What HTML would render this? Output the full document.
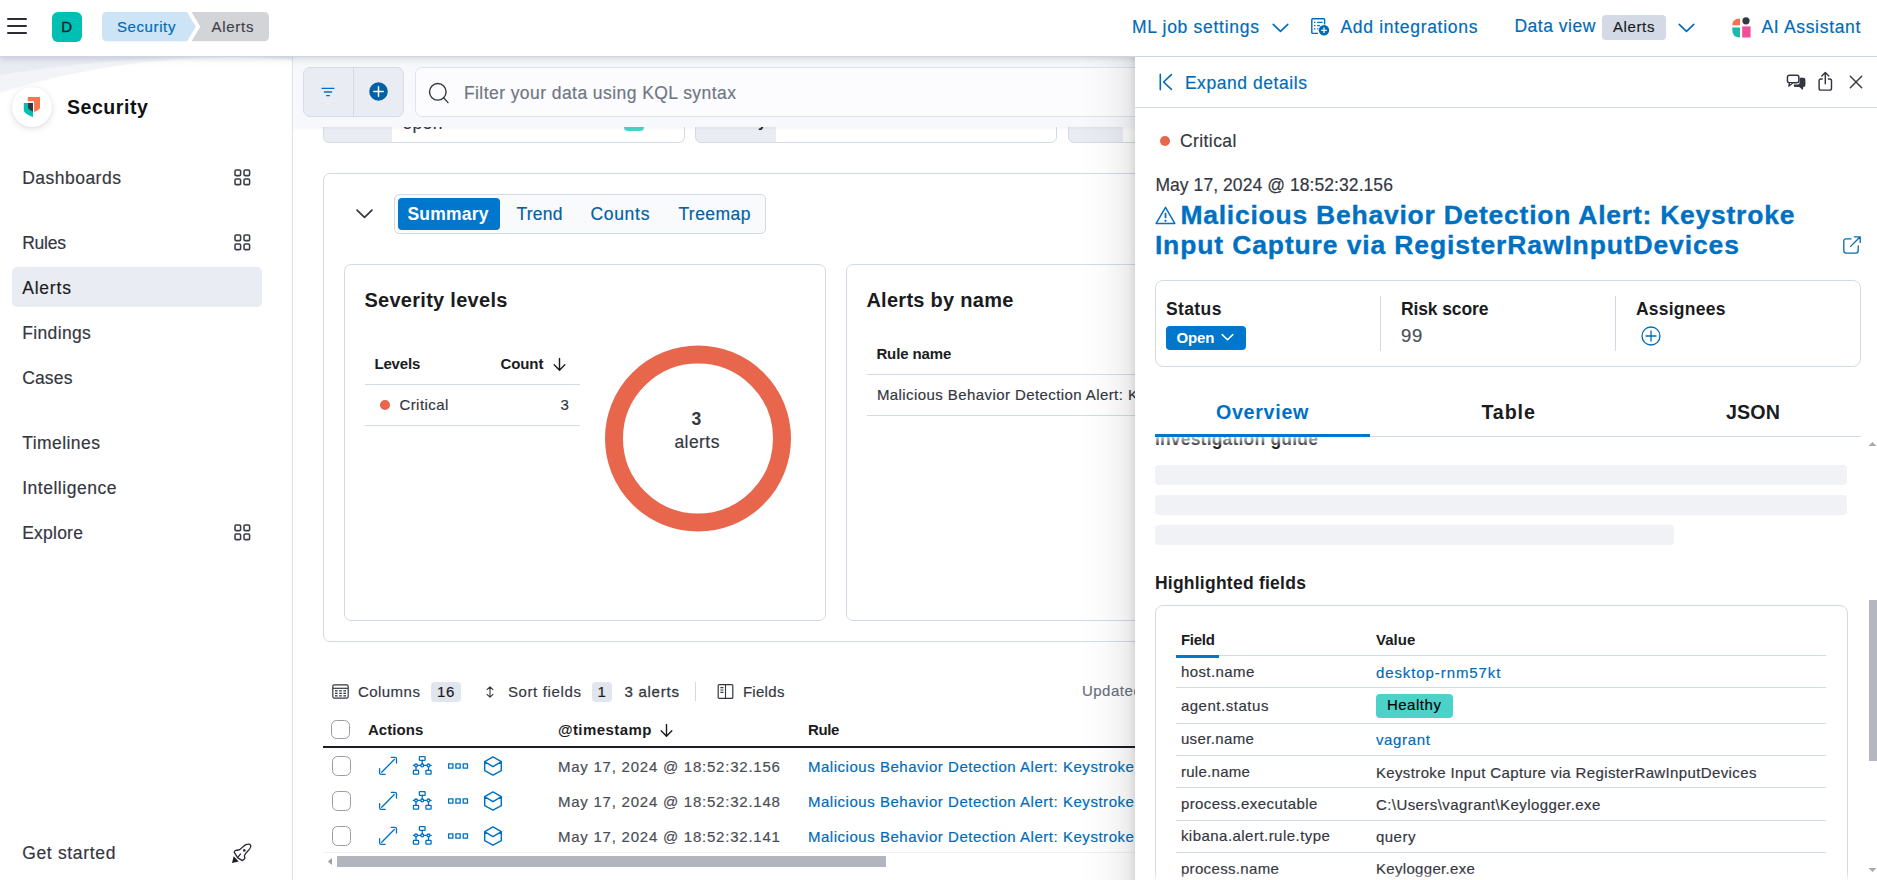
<!DOCTYPE html>
<html lang="en"><head><meta charset="utf-8"><title>Alerts - Security</title>
<style>
html,body{margin:0;padding:0;}
body{width:1877px;height:880px;overflow:hidden;background:#fff;position:relative;font-family:"Liberation Sans",sans-serif;}
.layer{position:absolute;left:0;top:0;width:1877px;height:880px;overflow:hidden;pointer-events:none;}
.layer>div,.layer>span,.layer>svg{position:absolute;box-sizing:border-box;}
.layer>span{white-space:nowrap;}
svg{overflow:visible;}
</style></head><body>
<div class="layer main" style="clip-path:inset(56px 742px 0 293px);">
<div style="left:323px;top:100px;width:362px;height:43px;border:1px solid #d3dae6;border-radius:6px;background:linear-gradient(90deg,#e9edf3 0,#e9edf3 68px,#fff 68px);"></div>
<div style="left:695px;top:100px;width:362px;height:43px;border:1px solid #d3dae6;border-radius:6px;background:linear-gradient(90deg,#e9edf3 0,#e9edf3 80px,#fff 80px);"></div>
<div style="left:1068px;top:100px;width:362px;height:43px;border:1px solid #d3dae6;border-radius:6px;background:linear-gradient(90deg,#e9edf3 0,#e9edf3 54px,#fff 54px);"></div>
<div style="left:624px;top:110px;width:20px;height:21px;background:#4dd2ca;border-radius:4px;"></div>
<span style="left:402.4px;top:111px;line-height:24px;font-size:17.5px;color:#343741;letter-spacing:0.354px;-webkit-text-stroke:0.18px;">open</span>
<span style="left:707.4px;top:111px;line-height:21px;font-size:15px;color:#1a1c21;font-weight:700;letter-spacing:0.089px;">Severity</span>
<span style="left:335.4px;top:111px;line-height:21px;font-size:15px;color:#1a1c21;font-weight:700;letter-spacing:-0.369px;">Status</span>
<div style="left:323px;top:173px;width:1177px;height:469px;border:1px solid #d3dae6;border-radius:7px;background:#fff;"></div>
<svg style="left:355px;top:204px" width="19" height="19" viewBox="0 0 19 19"><path d="M2 6.2 L9.5 13.4 L17 6.2" fill="none" stroke="#343741" stroke-width="1.7" stroke-linecap="round" stroke-linejoin="round"/></svg>
<div style="left:394px;top:194px;width:372px;height:40px;border:1px solid #d3dae6;border-radius:5px;background:#f9fafc;"></div>
<div style="left:398px;top:198px;width:102px;height:32px;background:#0077cc;border-radius:4px;"></div>
<span style="left:407.4px;top:202px;line-height:24px;font-size:17.5px;color:#fff;font-weight:700;letter-spacing:0.206px;">Summary</span>
<span style="left:516.4px;top:202px;line-height:24px;font-size:17.5px;color:#0061a6;letter-spacing:0.230px;-webkit-text-stroke:0.18px;">Trend</span>
<span style="left:590.4px;top:202px;line-height:24px;font-size:17.5px;color:#0061a6;letter-spacing:0.709px;-webkit-text-stroke:0.18px;">Counts</span>
<span style="left:678.4px;top:202px;line-height:24px;font-size:17.5px;color:#0061a6;letter-spacing:0.435px;-webkit-text-stroke:0.18px;">Treemap</span>
<div style="left:344px;top:264px;width:482px;height:357px;border:1px solid #d3dae6;border-radius:7px;background:#fff;"></div>
<span style="left:364.4px;top:286px;line-height:28px;font-size:20px;color:#1a1c21;font-weight:700;letter-spacing:0.286px;">Severity levels</span>
<span style="left:374.4px;top:353px;line-height:21px;font-size:15px;color:#1a1c21;font-weight:700;letter-spacing:-0.141px;">Levels</span>
<span style="left:500.4px;top:353px;line-height:21px;font-size:15px;color:#1a1c21;font-weight:700;letter-spacing:-0.082px;">Count</span>
<svg style="left:552px;top:356.5px" width="15" height="15" viewBox="0 0 15 15"><path d="M7.5 1.5 V13 M2.2 7.8 L7.5 13.2 L12.8 7.8" fill="none" stroke="#1a1c21" stroke-width="1.4" stroke-linecap="round" stroke-linejoin="round"/></svg>
<div style="left:365px;top:384px;width:215px;height:1px;background:#d3dae6;"></div>
<div style="left:380px;top:399.5px;width:10px;height:10px;background:#e7664c;border-radius:50%;"></div>
<span style="left:399.4px;top:394px;line-height:21px;font-size:15px;color:#343741;letter-spacing:0.451px;-webkit-text-stroke:0.18px;">Critical</span>
<span style="left:560.4px;top:394px;line-height:21px;font-size:15px;color:#343741;letter-spacing:0.656px;-webkit-text-stroke:0.18px;">3</span>
<div style="left:365px;top:425px;width:215px;height:1px;background:#d3dae6;"></div>
<svg style="left:598px;top:339px" width="200" height="200" viewBox="0 0 200 200"><circle cx="100" cy="99.5" r="84" fill="none" stroke="#e7664c" stroke-width="18"/></svg>
<span style="left:691.4px;top:407px;line-height:24px;font-size:17.5px;color:#343741;font-weight:700;letter-spacing:1.266px;">3</span>
<span style="left:674.4px;top:430px;line-height:24px;font-size:17.5px;color:#343741;letter-spacing:0.441px;-webkit-text-stroke:0.18px;">alerts</span>
<div style="left:846px;top:264px;width:554px;height:357px;border:1px solid #d3dae6;border-radius:7px;background:#fff;"></div>
<span style="left:866.4px;top:286px;line-height:28px;font-size:20px;color:#1a1c21;font-weight:700;letter-spacing:0.278px;">Alerts by name</span>
<span style="left:876.4px;top:343px;line-height:21px;font-size:15px;color:#1a1c21;font-weight:700;letter-spacing:-0.107px;">Rule name</span>
<div style="left:867px;top:374px;width:533px;height:1px;background:#d3dae6;"></div>
<span style="left:876.9px;top:384px;line-height:21px;font-size:15px;color:#343741;letter-spacing:0.418px;-webkit-text-stroke:0.18px;">Malicious Behavior Detection Alert: Keystroke Input Capture</span>
<div style="left:867px;top:415px;width:533px;height:1px;background:#d3dae6;"></div>
<svg style="left:332px;top:683px" width="17" height="17" viewBox="0 0 17 17"><rect x="0.8" y="1.8" width="15.4" height="13.4" rx="1.6" fill="none" stroke="#343741" stroke-width="1.2"/><path d="M1 5.3 H16" stroke="#343741" stroke-width="1.2"/><g fill="#343741"><rect x="3" y="7.2" width="2.6" height="1.3"/><rect x="7.2" y="7.2" width="2.6" height="1.3"/><rect x="11.4" y="7.2" width="2.6" height="1.3"/><rect x="3" y="9.7" width="2.6" height="1.3"/><rect x="7.2" y="9.7" width="2.6" height="1.3"/><rect x="11.4" y="9.7" width="2.6" height="1.3"/><rect x="3" y="12.2" width="2.6" height="1.3"/><rect x="7.2" y="12.2" width="2.6" height="1.3"/><rect x="11.4" y="12.2" width="2.6" height="1.3"/></g></svg>
<span style="left:357.9px;top:681px;line-height:21px;font-size:15px;color:#343741;letter-spacing:0.469px;-webkit-text-stroke:0.18px;">Columns</span>
<div style="left:431px;top:682px;width:30px;height:20px;background:#e0e5ee;border-radius:4px;"></div>
<span style="left:436.9px;top:681px;line-height:21px;font-size:15px;color:#1a1c21;letter-spacing:0.812px;-webkit-text-stroke:0.18px;">16</span>
<svg style="left:484px;top:686px" width="12" height="12" viewBox="0 0 12 12"><path d="M6 1 V11 M3 3.6 L6 0.8 L9 3.6 M3 8.4 L6 11.2 L9 8.4" fill="none" stroke="#343741" stroke-width="1.1" stroke-linecap="round" stroke-linejoin="round"/></svg>
<span style="left:507.9px;top:681px;line-height:21px;font-size:15px;color:#343741;letter-spacing:0.630px;-webkit-text-stroke:0.18px;">Sort fields</span>
<div style="left:592px;top:682px;width:20px;height:20px;background:#e0e5ee;border-radius:4px;"></div>
<span style="left:597.4px;top:681px;line-height:21px;font-size:15px;color:#1a1c21;letter-spacing:-0.344px;-webkit-text-stroke:0.18px;">1</span>
<span style="left:624.4px;top:681px;line-height:21px;font-size:15px;color:#343741;letter-spacing:0.757px;-webkit-text-stroke:0.3px #343741;">3 alerts</span>
<div style="left:695px;top:682px;width:1px;height:19px;background:#d3dae6;"></div>
<svg style="left:717px;top:683px" width="17" height="17" viewBox="0 0 17 17"><rect x="1.2" y="1.6" width="14.6" height="13.8" rx="1" fill="none" stroke="#343741" stroke-width="1.2"/><path d="M8.5 1.6 V15.4 M3.4 4.6 H6.4 M3.4 7 H6.4 M3.4 9.4 H6.4" stroke="#343741" stroke-width="1.1" fill="none"/></svg>
<span style="left:742.9px;top:681px;line-height:21px;font-size:15px;color:#343741;letter-spacing:0.297px;-webkit-text-stroke:0.18px;">Fields</span>
<span style="left:1081.9px;top:680px;line-height:21px;font-size:15px;color:#69707d;letter-spacing:0.525px;-webkit-text-stroke:0.18px;">Updated</span>
<div style="left:331px;top:720px;width:19px;height:19px;border:1.3px solid #9a9da6;border-radius:5.5px;background:#fff;"></div>
<span style="left:367.9px;top:719px;line-height:21px;font-size:15px;color:#1a1c21;font-weight:700;letter-spacing:0.081px;">Actions</span>
<span style="left:557.9px;top:719px;line-height:21px;font-size:15px;color:#1a1c21;font-weight:700;letter-spacing:0.427px;">@timestamp</span>
<svg style="left:659px;top:723px" width="15" height="15" viewBox="0 0 15 15"><path d="M7.5 1.5 V13 M2.2 7.8 L7.5 13.2 L12.8 7.8" fill="none" stroke="#1a1c21" stroke-width="1.4" stroke-linecap="round" stroke-linejoin="round"/></svg>
<span style="left:807.9px;top:719px;line-height:21px;font-size:15px;color:#1a1c21;font-weight:700;letter-spacing:-0.339px;">Rule</span>
<div style="left:323px;top:746px;width:1177px;height:2px;background:#1a1c21;"></div>
<div style="left:332px;top:756px;width:19px;height:20px;border:1.3px solid #9a9da6;border-radius:5.5px;background:#fff;"></div>
<svg style="left:378px;top:756px" width="126" height="20" viewBox="0 0 126 20" fill="none" stroke="#0071c2" stroke-width="1.3" stroke-linecap="round" stroke-linejoin="round"><path d="M3.7 16.3 L16.3 3.5 M13.3 1.3 H16.9 Q18.5 1.3 18.5 2.9 V7 M1.6 12.7 V16.7 Q1.6 18.3 3.2 18.3 H7.2"/><g transform="translate(34.5,0)"><rect x="6.9" y="0.7" width="5.7" height="3.6" rx="0.6"/><path d="M9.75 4.3 V8 M0.9 9.4 H18.6 M3.5 10.8 V14.2 M16 10.8 V14.2"/><circle cx="3.5" cy="9.4" r="1.4" fill="#fff"/><circle cx="9.75" cy="9.4" r="1.4" fill="#fff"/><circle cx="16" cy="9.4" r="1.4" fill="#fff"/><rect x="0.9" y="14.4" width="5.2" height="3.7" rx="0.6"/><rect x="13.4" y="14.4" width="5.2" height="3.7" rx="0.6"/></g><rect x="70.6" y="7.9" width="4.3" height="4.3"/><rect x="77.9" y="7.9" width="4.3" height="4.3"/><rect x="85.2" y="7.9" width="4.3" height="4.3"/><path stroke-width="1.45" d="M115 0.9 L123.3 5.6 V14.6 L115 19.2 L106.7 14.6 V5.6 Z M106.9 5.8 L115 10.7 L123.1 5.8"/></svg>
<span style="left:557.9px;top:756px;line-height:21px;font-size:15px;color:#4a4d56;letter-spacing:0.767px;-webkit-text-stroke:0.18px;">May 17, 2024 @ 18:52:32.156</span>
<span style="left:807.9px;top:756px;line-height:21px;font-size:15px;color:#006bb8;letter-spacing:0.531px;-webkit-text-stroke:0.18px;">Malicious Behavior Detection Alert: Keystroke Input Capture</span>
<div style="left:332px;top:791px;width:19px;height:20px;border:1.3px solid #9a9da6;border-radius:5.5px;background:#fff;"></div>
<svg style="left:378px;top:791px" width="126" height="20" viewBox="0 0 126 20" fill="none" stroke="#0071c2" stroke-width="1.3" stroke-linecap="round" stroke-linejoin="round"><path d="M3.7 16.3 L16.3 3.5 M13.3 1.3 H16.9 Q18.5 1.3 18.5 2.9 V7 M1.6 12.7 V16.7 Q1.6 18.3 3.2 18.3 H7.2"/><g transform="translate(34.5,0)"><rect x="6.9" y="0.7" width="5.7" height="3.6" rx="0.6"/><path d="M9.75 4.3 V8 M0.9 9.4 H18.6 M3.5 10.8 V14.2 M16 10.8 V14.2"/><circle cx="3.5" cy="9.4" r="1.4" fill="#fff"/><circle cx="9.75" cy="9.4" r="1.4" fill="#fff"/><circle cx="16" cy="9.4" r="1.4" fill="#fff"/><rect x="0.9" y="14.4" width="5.2" height="3.7" rx="0.6"/><rect x="13.4" y="14.4" width="5.2" height="3.7" rx="0.6"/></g><rect x="70.6" y="7.9" width="4.3" height="4.3"/><rect x="77.9" y="7.9" width="4.3" height="4.3"/><rect x="85.2" y="7.9" width="4.3" height="4.3"/><path stroke-width="1.45" d="M115 0.9 L123.3 5.6 V14.6 L115 19.2 L106.7 14.6 V5.6 Z M106.9 5.8 L115 10.7 L123.1 5.8"/></svg>
<span style="left:557.9px;top:791px;line-height:21px;font-size:15px;color:#4a4d56;letter-spacing:0.767px;-webkit-text-stroke:0.18px;">May 17, 2024 @ 18:52:32.148</span>
<span style="left:807.9px;top:791px;line-height:21px;font-size:15px;color:#006bb8;letter-spacing:0.531px;-webkit-text-stroke:0.18px;">Malicious Behavior Detection Alert: Keystroke Input Capture</span>
<div style="left:332px;top:826px;width:19px;height:20px;border:1.3px solid #9a9da6;border-radius:5.5px;background:#fff;"></div>
<svg style="left:378px;top:826px" width="126" height="20" viewBox="0 0 126 20" fill="none" stroke="#0071c2" stroke-width="1.3" stroke-linecap="round" stroke-linejoin="round"><path d="M3.7 16.3 L16.3 3.5 M13.3 1.3 H16.9 Q18.5 1.3 18.5 2.9 V7 M1.6 12.7 V16.7 Q1.6 18.3 3.2 18.3 H7.2"/><g transform="translate(34.5,0)"><rect x="6.9" y="0.7" width="5.7" height="3.6" rx="0.6"/><path d="M9.75 4.3 V8 M0.9 9.4 H18.6 M3.5 10.8 V14.2 M16 10.8 V14.2"/><circle cx="3.5" cy="9.4" r="1.4" fill="#fff"/><circle cx="9.75" cy="9.4" r="1.4" fill="#fff"/><circle cx="16" cy="9.4" r="1.4" fill="#fff"/><rect x="0.9" y="14.4" width="5.2" height="3.7" rx="0.6"/><rect x="13.4" y="14.4" width="5.2" height="3.7" rx="0.6"/></g><rect x="70.6" y="7.9" width="4.3" height="4.3"/><rect x="77.9" y="7.9" width="4.3" height="4.3"/><rect x="85.2" y="7.9" width="4.3" height="4.3"/><path stroke-width="1.45" d="M115 0.9 L123.3 5.6 V14.6 L115 19.2 L106.7 14.6 V5.6 Z M106.9 5.8 L115 10.7 L123.1 5.8"/></svg>
<span style="left:557.9px;top:826px;line-height:21px;font-size:15px;color:#4a4d56;letter-spacing:0.767px;-webkit-text-stroke:0.18px;">May 17, 2024 @ 18:52:32.141</span>
<span style="left:807.9px;top:826px;line-height:21px;font-size:15px;color:#006bb8;letter-spacing:0.531px;-webkit-text-stroke:0.18px;">Malicious Behavior Detection Alert: Keystroke Input Capture</span>
<div style="left:323px;top:852px;width:1177px;height:1px;background:#eef0f4;"></div>
<div style="left:337px;top:856px;width:549px;height:11px;background:#b2b5bd;"></div>
<svg style="left:327px;top:857px" width="6" height="9" viewBox="0 0 6 9"><path d="M5 1 L1 4.5 L5 8 Z" fill="#9a9da5"/></svg>
</div>
<div class="layer sticky" style="clip-path:inset(56px 742px 0 293px);">
<div style="left:293px;top:57px;width:1584px;height:70px;background:#f7f8fb;box-shadow:0 2px 3px rgba(0,0,0,.04);"></div>
<div style="left:303px;top:67px;width:101px;height:50px;border:1px solid #d6dbe6;border-radius:7px;background:#e9edf3;"></div>
<div style="left:353px;top:68px;width:1px;height:48px;background:#d3dae6;"></div>
<svg style="left:321px;top:86px" width="14" height="12" viewBox="0 0 14 12"><path d="M1 2.3 H13 M3.4 6 H10.6 M5.6 9.7 H8.4" stroke="#0071c2" stroke-width="1.3" stroke-linecap="round" fill="none"/></svg>
<svg style="left:369px;top:82px" width="19" height="19" viewBox="0 0 19 19"><circle cx="9.5" cy="9.5" r="9.3" fill="#0061a6"/><path d="M9.5 4.8 V14.2 M4.8 9.5 H14.2" stroke="#fff" stroke-width="1.5" stroke-linecap="round"/></svg>
<div style="left:414.5px;top:67px;width:1285.5px;height:50px;border:1px solid #dfe3ec;border-radius:7px;background:#fcfcfe;"></div>
<svg style="left:428px;top:82px" width="22" height="22" viewBox="0 0 22 22"><circle cx="9.8" cy="9.8" r="8.3" fill="none" stroke="#343741" stroke-width="1.4"/><path d="M15.7 15.9 L20 20.6" stroke="#343741" stroke-width="1.4" stroke-linecap="round"/></svg>
<span style="left:463.9px;top:81px;line-height:24px;font-size:17.5px;color:#6f7683;letter-spacing:0.435px;-webkit-text-stroke:0.18px;">Filter your data using KQL syntax</span>
</div>
<div class="layer side" style="">
<div style="left:0px;top:57px;width:293px;height:823px;background:radial-gradient(circle 1416px at 228px 1413.5px,rgba(233,235,242,0) 0,rgba(233,235,242,0) 1413.2px,#e9ebf2 1414.8px),radial-gradient(circle 776px at 231px 774px,#fff 0,#fff 772.6px,#f3f4f8 774.4px);border-right:1px solid #dde1ec;"></div>
<div style="left:12px;top:87px;width:40px;height:40px;background:#fff;border-radius:50%;box-shadow:0 2px 6px rgba(60,70,90,.16),0 0 2px rgba(60,70,90,.08);"></div>
<svg style="left:22px;top:95px" width="20" height="24" viewBox="0 0 20 24"><path d="M5.8 2 H18 V13.3 Q16.2 15.4 12.1 17 V6.3 H5.8 Z" fill="#fa744e"/><path d="M1.8 8.1 H11 V22 Q3.8 19.6 1.8 16 Z" fill="#00bfb3"/><path d="M6.1 8.1 H11 V16.7 Q7.6 15.4 6.1 13 Z" fill="#343741"/></svg>
<span style="left:66.9px;top:94px;line-height:27px;font-size:19.5px;color:#111216;font-weight:700;letter-spacing:0.578px;">Security</span>
<div style="left:12px;top:267px;width:250px;height:39.5px;background:#e9edf3;border-radius:5px;"></div>
<span style="left:22.2px;top:166px;line-height:24px;font-size:17.5px;color:#343741;letter-spacing:0.481px;-webkit-text-stroke:0.18px;">Dashboards</span>
<svg style="left:234px;top:168.8px" width="17" height="17" viewBox="0 0 17 17" fill="none" stroke="#3a3d47" stroke-width="1.55"><rect x="1" y="1" width="5.6" height="5.6" rx="1.2"/><rect x="10" y="1" width="5.6" height="5.6" rx="1.2"/><rect x="1" y="10" width="5.6" height="5.6" rx="1.2"/><rect x="10" y="10" width="5.6" height="5.6" rx="1.2"/></svg>
<span style="left:22.2px;top:231px;line-height:24px;font-size:17.5px;color:#343741;letter-spacing:-0.262px;-webkit-text-stroke:0.18px;">Rules</span>
<svg style="left:234px;top:233.8px" width="17" height="17" viewBox="0 0 17 17" fill="none" stroke="#3a3d47" stroke-width="1.55"><rect x="1" y="1" width="5.6" height="5.6" rx="1.2"/><rect x="10" y="1" width="5.6" height="5.6" rx="1.2"/><rect x="1" y="10" width="5.6" height="5.6" rx="1.2"/><rect x="10" y="10" width="5.6" height="5.6" rx="1.2"/></svg>
<span style="left:22.2px;top:276px;line-height:24px;font-size:17.5px;color:#1a1c21;letter-spacing:0.793px;-webkit-text-stroke:0.18px;">Alerts</span>
<span style="left:22.2px;top:321px;line-height:24px;font-size:17.5px;color:#343741;letter-spacing:0.363px;-webkit-text-stroke:0.18px;">Findings</span>
<span style="left:22.2px;top:366px;line-height:24px;font-size:17.5px;color:#343741;letter-spacing:0.148px;-webkit-text-stroke:0.18px;">Cases</span>
<span style="left:22.2px;top:431px;line-height:24px;font-size:17.5px;color:#343741;letter-spacing:0.433px;-webkit-text-stroke:0.18px;">Timelines</span>
<span style="left:22.2px;top:476px;line-height:24px;font-size:17.5px;color:#343741;letter-spacing:0.514px;-webkit-text-stroke:0.18px;">Intelligence</span>
<span style="left:22.2px;top:521px;line-height:24px;font-size:17.5px;color:#343741;letter-spacing:0.226px;-webkit-text-stroke:0.18px;">Explore</span>
<svg style="left:234px;top:523.8px" width="17" height="17" viewBox="0 0 17 17" fill="none" stroke="#3a3d47" stroke-width="1.55"><rect x="1" y="1" width="5.6" height="5.6" rx="1.2"/><rect x="10" y="1" width="5.6" height="5.6" rx="1.2"/><rect x="1" y="10" width="5.6" height="5.6" rx="1.2"/><rect x="10" y="10" width="5.6" height="5.6" rx="1.2"/></svg>
<span style="left:22.2px;top:841px;line-height:24px;font-size:17.5px;color:#343741;letter-spacing:0.662px;-webkit-text-stroke:0.18px;">Get started</span>
<svg style="left:230px;top:842px" width="24" height="24" viewBox="0 0 24 24"><path d="M15.9 2.6 C18 1.9 20.1 2 20.7 3.2 C21.2 4.6 20.6 6 19.3 7.4 C17.5 9.4 15 11.5 14.5 13.4 C14.3 14.6 15 15.6 14.8 16.5 L12.5 18.6 L7.8 15.8 L4.2 10.3 C4.4 9 5 8.5 5.7 8.4 C7 8.2 8.5 8.3 9.7 7.6 C11.8 6.4 13.5 3.5 15.9 2.6 Z" fill="none" stroke="#2b2d36" stroke-width="1.35" stroke-linejoin="round"/><circle cx="14.3" cy="8.4" r="1.3" fill="#2b2d36"/><path d="M10.6 11.9 L8 15.1" stroke="#2b2d36" stroke-width="1.3" stroke-linecap="round"/><path d="M3.7 14.2 L8.7 19.5 L2 20.9 Z" fill="#1a1c21"/></svg>
</div>
<div class="layer header" style="">
<div style="left:0px;top:0px;width:1877px;height:57px;background:#fff;border-bottom:1px solid #cdd3e2;box-shadow:0 2px 4px rgba(40,50,80,.10),0 4px 8px rgba(40,50,80,.05);"></div>
<div style="left:7px;top:18.4px;width:20.3px;height:2.1px;background:#2b2d36;border-radius:1px;"></div>
<div style="left:7px;top:25px;width:20.3px;height:2.1px;background:#2b2d36;border-radius:1px;"></div>
<div style="left:7px;top:31.6px;width:20.3px;height:2.1px;background:#2b2d36;border-radius:1px;"></div>
<div style="left:52px;top:12px;width:30px;height:30px;background:#00bfb3;border-radius:6px;"></div>
<span style="left:61.2px;top:16px;line-height:21px;font-size:15px;color:#1a1c21;letter-spacing:-0.844px;-webkit-text-stroke:0.3px #1a1c21;">D</span>
<svg style="left:102px;top:12px" width="168" height="30" viewBox="0 0 168 30"><path d="M5 0 H85 L93.8 14.7 L85 29.3 H5 Q0 29.3 0 24.3 V5 Q0 0 5 0 Z" fill="#cce4f5"/><path d="M89.5 0 H162 Q167 0 167 5 V24.3 Q167 29.3 162 29.3 H89.5 L98.3 14.7 Z" fill="#d3d4d7"/></svg>
<span style="left:116.9px;top:16px;line-height:21px;font-size:15px;color:#006bb8;letter-spacing:0.616px;-webkit-text-stroke:0.18px;">Security</span>
<span style="left:211.4px;top:16px;line-height:21px;font-size:15px;color:#3f424b;letter-spacing:0.731px;-webkit-text-stroke:0.18px;">Alerts</span>
<span style="left:1131.9px;top:15px;line-height:24px;font-size:17.5px;color:#006bb8;letter-spacing:0.710px;-webkit-text-stroke:0.18px;">ML job settings</span>
<svg style="left:1272px;top:22.5px" width="17" height="10" viewBox="0 0 17 10"><path d="M1.2 1.4 L8.5 8.4 L15.8 1.4" fill="none" stroke="#006bb8" stroke-width="1.6" stroke-linecap="round" stroke-linejoin="round"/></svg>
<svg style="left:1311px;top:18px" width="19" height="18" viewBox="0 0 19 18"><path d="M13.6 6.6 V1.6 Q13.6 0.8 12.8 0.8 H1.6 Q0.8 0.8 0.8 1.6 V14.6 Q0.8 15.4 1.6 15.4 H7" fill="none" stroke="#006bb8" stroke-width="1.4"/><path d="M3 4.3 H4.4 M6.2 4.3 H11.6 M3 7.6 H4.4 M6.2 7.6 H8.8 M3 10.9 H4.4 M6.2 10.9 H7.4" stroke="#006bb8" stroke-width="1.3" fill="none"/><circle cx="13" cy="12.3" r="5.2" fill="#006bb8"/><path d="M13 9.6 V15 M10.3 12.3 H15.7" stroke="#fff" stroke-width="1.3"/></svg>
<span style="left:1340.4px;top:15px;line-height:24px;font-size:17.5px;color:#006bb8;letter-spacing:0.701px;-webkit-text-stroke:0.18px;">Add integrations</span>
<span style="left:1514.4px;top:14px;line-height:24px;font-size:17.5px;color:#006bb8;letter-spacing:0.520px;-webkit-text-stroke:0.18px;">Data view</span>
<div style="left:1602px;top:15px;width:64px;height:25px;background:#d3dae6;border-radius:4px;"></div>
<span style="left:1612.9px;top:16px;line-height:21px;font-size:15px;color:#1a1c21;letter-spacing:0.631px;-webkit-text-stroke:0.18px;">Alerts</span>
<svg style="left:1677.5px;top:22.5px" width="17" height="10" viewBox="0 0 17 10"><path d="M1.2 1.4 L8.5 8.4 L15.8 1.4" fill="none" stroke="#006bb8" stroke-width="1.6" stroke-linecap="round" stroke-linejoin="round"/></svg>
<svg style="left:1731.5px;top:16.5px" width="19" height="21" viewBox="0 0 19 21"><path d="M0.3 8.2 Q0.3 1.6 8 1.6 V8.2 Z" fill="#f9704e"/><circle cx="14" cy="3.8" r="3.6" fill="#343741"/><path d="M0.3 10.6 H8 V20.5 Q0.3 20.5 0.3 13 Z" fill="#1bb9ae"/><rect x="10.2" y="9.4" width="8.4" height="11.1" fill="#f04e98"/></svg>
<span style="left:1761.4px;top:15px;line-height:24px;font-size:17.5px;color:#006bb8;letter-spacing:0.688px;-webkit-text-stroke:0.18px;">AI Assistant</span>
</div>
<div class="layer flyout" style="">
<div style="left:1075px;top:57px;width:60px;height:823px;background:linear-gradient(270deg,rgba(20,20,30,.16) 0,rgba(20,20,30,.085) 6px,rgba(20,20,30,.05) 15px,rgba(20,20,30,.02) 30px,rgba(20,20,30,0) 55px);"></div>
<div style="left:1135px;top:57px;width:742px;height:823px;background:#fff;"></div>
<svg style="left:1159px;top:73px" width="14" height="18" viewBox="0 0 14 18"><path d="M1.3 1.4 V16.6 M12.4 1.6 L4.6 9 L12.4 16.4" fill="none" stroke="#006bb8" stroke-width="1.6" stroke-linecap="round" stroke-linejoin="round"/></svg>
<span style="left:1184.9px;top:71px;line-height:24px;font-size:17.5px;color:#006bb8;letter-spacing:0.553px;-webkit-text-stroke:0.18px;">Expand details</span>
<svg style="left:1786px;top:73px" width="21" height="18" viewBox="0 0 21 18"><path d="M13.6 4.8 H17.4 Q19.4 4.8 19.4 6.8 V12 Q19.4 14 17.4 14 H17.2 L16.9 17 L13.2 14 H9.4 Q7.8 14 7.8 12.4 V11.6 H11.8 Q13.6 11.6 13.6 9.8 Z" fill="#343741"/><rect x="1.45" y="2.15" width="11.4" height="7.7" rx="2" fill="#fff" stroke="#343741" stroke-width="1.5"/><path d="M3.5 9.9 L2.8 13.2 L6.6 10" fill="#fff" stroke="#343741" stroke-width="1.3" stroke-linejoin="round"/></svg>
<svg style="left:1817px;top:71px" width="17" height="21" viewBox="0 0 17 21"><path d="M5.2 7.9 H4 Q2.1 7.9 2.1 9.8 V17.2 Q2.1 19.1 4 19.1 H12.6 Q14.5 19.1 14.5 17.2 V9.8 Q14.5 7.9 12.6 7.9 H11.4" fill="none" stroke="#343741" stroke-width="1.45" stroke-linecap="round"/><path d="M8.3 12.8 V1.8 M4.8 5 L8.3 1.5 L11.8 5" fill="none" stroke="#343741" stroke-width="1.45" stroke-linecap="round" stroke-linejoin="round"/></svg>
<svg style="left:1849px;top:75px" width="14" height="14" viewBox="0 0 14 14"><path d="M1.3 1.3 L12.7 12.7 M12.7 1.3 L1.3 12.7" stroke="#343741" stroke-width="1.4" stroke-linecap="round"/></svg>
<div style="left:1135px;top:107px;width:742px;height:1px;background:#d3dae6;"></div>
<div style="left:1160px;top:136px;width:10px;height:10px;background:#e7664c;border-radius:50%;"></div>
<span style="left:1179.9px;top:129px;line-height:24px;font-size:17.5px;color:#343741;letter-spacing:0.431px;-webkit-text-stroke:0.18px;">Critical</span>
<span style="left:1155.4px;top:173px;line-height:24px;font-size:17.5px;color:#343741;letter-spacing:0.069px;-webkit-text-stroke:0.18px;">May 17, 2024 @ 18:52:32.156</span>
<svg style="left:1154.5px;top:205.5px" width="21" height="19" viewBox="0 0 21 19"><path d="M10.5 1.4 L19.8 17.4 H1.2 Z" fill="none" stroke="#0071c2" stroke-width="1.5" stroke-linejoin="round"/><path d="M10.5 7 V12.2" stroke="#0071c2" stroke-width="1.8"/><circle cx="10.5" cy="14.8" r="1.1" fill="#0071c2"/></svg>
<span style="left:1180.4px;top:197px;line-height:37px;font-size:26.5px;color:#0071c2;font-weight:700;letter-spacing:0.756px;-webkit-text-stroke:0.35px #0071c2;">Malicious Behavior Detection Alert: Keystroke</span>
<span style="left:1154.9px;top:227px;line-height:37px;font-size:26.5px;color:#0071c2;font-weight:700;letter-spacing:0.868px;-webkit-text-stroke:0.35px #0071c2;">Input Capture via RegisterRawInputDevices</span>
<svg style="left:1843px;top:235.5px" width="18" height="18" viewBox="0 0 18 18"><path d="M8 2.8 H3.2 Q0.8 2.8 0.8 5.2 V14.8 Q0.8 17.2 3.2 17.2 H12.8 Q15.2 17.2 15.2 14.8 V10" fill="none" stroke="#006bb8" stroke-width="1.3" stroke-linecap="round"/><path d="M7.6 10.4 L17 1 M11.4 0.8 H17.2 V6.6" fill="none" stroke="#006bb8" stroke-width="1.3" stroke-linecap="round" stroke-linejoin="round"/></svg>
<div style="left:1155px;top:280px;width:706px;height:86.5px;border:1px solid #d3dae6;border-radius:8px;background:#fff;"></div>
<span style="left:1165.9px;top:297px;line-height:24px;font-size:17.5px;color:#1a1c21;font-weight:700;letter-spacing:0.403px;">Status</span>
<div style="left:1166px;top:326px;width:80px;height:24px;background:#0077cc;border-radius:4px;"></div>
<span style="left:1176.4px;top:327px;line-height:21px;font-size:15px;color:#fff;font-weight:700;letter-spacing:-0.115px;">Open</span>
<svg style="left:1221px;top:333px" width="13" height="9" viewBox="0 0 13 9"><path d="M1.2 1.6 L6.5 6.8 L11.8 1.6" fill="none" stroke="#fff" stroke-width="1.5" stroke-linecap="round" stroke-linejoin="round"/></svg>
<div style="left:1380px;top:296px;width:1px;height:55px;background:#d3dae6;"></div>
<span style="left:1400.9px;top:297px;line-height:24px;font-size:17.5px;color:#1a1c21;font-weight:700;letter-spacing:-0.115px;">Risk score</span>
<span style="left:1400.9px;top:323px;line-height:26px;font-size:18.5px;color:#4a4d56;letter-spacing:0.922px;-webkit-text-stroke:0.18px;">99</span>
<div style="left:1615px;top:296px;width:1px;height:55px;background:#d3dae6;"></div>
<span style="left:1635.9px;top:297px;line-height:24px;font-size:17.5px;color:#1a1c21;font-weight:700;letter-spacing:0.244px;">Assignees</span>
<svg style="left:1640.5px;top:325.5px" width="20" height="20" viewBox="0 0 20 20"><circle cx="10" cy="10" r="9" fill="none" stroke="#006bb8" stroke-width="1.3"/><path d="M10 5 V15 M5 10 H15" stroke="#006bb8" stroke-width="1.3" stroke-linecap="round"/></svg>
<span style="left:1215.9px;top:398px;line-height:28px;font-size:19.7px;color:#0071c2;font-weight:700;letter-spacing:0.705px;">Overview</span>
<span style="left:1481.4px;top:398px;line-height:28px;font-size:19.7px;color:#1a1c21;font-weight:700;letter-spacing:0.883px;">Table</span>
<span style="left:1725.9px;top:398px;line-height:28px;font-size:19.7px;color:#1a1c21;font-weight:700;letter-spacing:0.125px;">JSON</span>
<div style="left:1155px;top:435.5px;width:706px;height:1px;background:#d3dae6;"></div>
<div style="left:1155px;top:433.7px;width:215px;height:3.3px;background:#0077cc;"></div>
</div>
<div class="layer flyscroll" style="clip-path:inset(437px 0 0 1135px);">
<span style="left:1154.9px;top:427px;line-height:24px;font-size:17.5px;color:#1a1c21;font-weight:700;letter-spacing:0.196px;">Investigation guide</span>
<div style="left:1135px;top:437px;width:731px;height:10px;background:linear-gradient(180deg,rgba(255,255,255,.75),rgba(255,255,255,0));"></div>
<div style="left:1155px;top:465px;width:692px;height:20px;background:#f1f2f6;border-radius:4px;"></div>
<div style="left:1155px;top:495px;width:692px;height:20px;background:#f1f2f6;border-radius:4px;"></div>
<div style="left:1155px;top:525px;width:519px;height:20px;background:#f1f2f6;border-radius:4px;"></div>
<span style="left:1154.9px;top:571px;line-height:24px;font-size:17.5px;color:#1a1c21;font-weight:700;letter-spacing:0.246px;">Highlighted fields</span>
<div style="left:1155px;top:605px;width:692.5px;height:295px;border:1px solid #d3dae6;border-radius:8px;background:#fff;"></div>
<span style="left:1180.9px;top:629px;line-height:21px;font-size:15px;color:#1a1c21;font-weight:700;letter-spacing:-0.254px;">Field</span>
<span style="left:1375.9px;top:629px;line-height:21px;font-size:15px;color:#1a1c21;font-weight:700;letter-spacing:0.074px;">Value</span>
<div style="left:1176px;top:655px;width:650px;height:1px;background:#d3dae6;"></div>
<div style="left:1176px;top:655px;width:43px;height:3px;background:#0077cc;"></div>
<span style="left:1180.9px;top:661px;line-height:21px;font-size:15px;color:#343741;letter-spacing:0.432px;-webkit-text-stroke:0.18px;">host.name</span>
<span style="left:1375.9px;top:662px;line-height:21px;font-size:15px;color:#006bb8;letter-spacing:0.913px;-webkit-text-stroke:0.18px;">desktop-rnm57kt</span>
<div style="left:1176px;top:687px;width:650px;height:1px;background:#d3dae6;"></div>
<span style="left:1180.9px;top:695px;line-height:21px;font-size:15px;color:#343741;letter-spacing:0.524px;-webkit-text-stroke:0.18px;">agent.status</span>
<div style="left:1176px;top:723px;width:650px;height:1px;background:#d3dae6;"></div>
<span style="left:1180.9px;top:728px;line-height:21px;font-size:15px;color:#343741;letter-spacing:0.369px;-webkit-text-stroke:0.18px;">user.name</span>
<span style="left:1375.9px;top:729px;line-height:21px;font-size:15px;color:#006bb8;letter-spacing:0.659px;-webkit-text-stroke:0.18px;">vagrant</span>
<div style="left:1176px;top:755px;width:650px;height:1px;background:#d3dae6;"></div>
<span style="left:1180.9px;top:761px;line-height:21px;font-size:15px;color:#343741;letter-spacing:0.287px;-webkit-text-stroke:0.18px;">rule.name</span>
<span style="left:1375.9px;top:762px;line-height:21px;font-size:15px;color:#343741;letter-spacing:0.373px;-webkit-text-stroke:0.18px;">Keystroke Input Capture via RegisterRawInputDevices</span>
<div style="left:1176px;top:787px;width:650px;height:1px;background:#d3dae6;"></div>
<span style="left:1180.9px;top:793px;line-height:21px;font-size:15px;color:#343741;letter-spacing:0.426px;-webkit-text-stroke:0.18px;">process.executable</span>
<span style="left:1375.9px;top:794px;line-height:21px;font-size:15px;color:#343741;letter-spacing:0.439px;-webkit-text-stroke:0.18px;">C:\Users\vagrant\Keylogger.exe</span>
<div style="left:1176px;top:820px;width:650px;height:1px;background:#d3dae6;"></div>
<span style="left:1180.9px;top:825px;line-height:21px;font-size:15px;color:#343741;letter-spacing:0.464px;-webkit-text-stroke:0.18px;">kibana.alert.rule.type</span>
<span style="left:1375.9px;top:826px;line-height:21px;font-size:15px;color:#343741;letter-spacing:0.492px;-webkit-text-stroke:0.18px;">query</span>
<div style="left:1176px;top:852px;width:650px;height:1px;background:#d3dae6;"></div>
<span style="left:1180.9px;top:858px;line-height:21px;font-size:15px;color:#343741;letter-spacing:0.344px;-webkit-text-stroke:0.18px;">process.name</span>
<span style="left:1375.9px;top:858px;line-height:21px;font-size:15px;color:#343741;letter-spacing:0.327px;-webkit-text-stroke:0.18px;">Keylogger.exe</span>
<div style="left:1376px;top:693.5px;width:77px;height:24.5px;background:#4dd2ca;border-radius:4px;"></div>
<span style="left:1386.9px;top:694px;line-height:21px;font-size:15px;color:#000;letter-spacing:0.523px;-webkit-text-stroke:0.15px #000;">Healthy</span>
<div style="left:1155px;top:872px;width:693px;height:8px;background:linear-gradient(180deg,rgba(255,255,255,0),rgba(255,255,255,.8));"></div>
<div style="left:1868.5px;top:600px;width:8.5px;height:161px;background:#b4b7c0;"></div>
<svg style="left:1868px;top:441px" width="9" height="6" viewBox="0 0 9 6"><path d="M0.5 5 L4.5 1 L8.5 5 Z" fill="#a6a9b1"/></svg>
<svg style="left:1868px;top:867px" width="9" height="6" viewBox="0 0 9 6"><path d="M0.5 1 L4.5 5 L8.5 1 Z" fill="#a6a9b1"/></svg>
</div>
</body></html>
